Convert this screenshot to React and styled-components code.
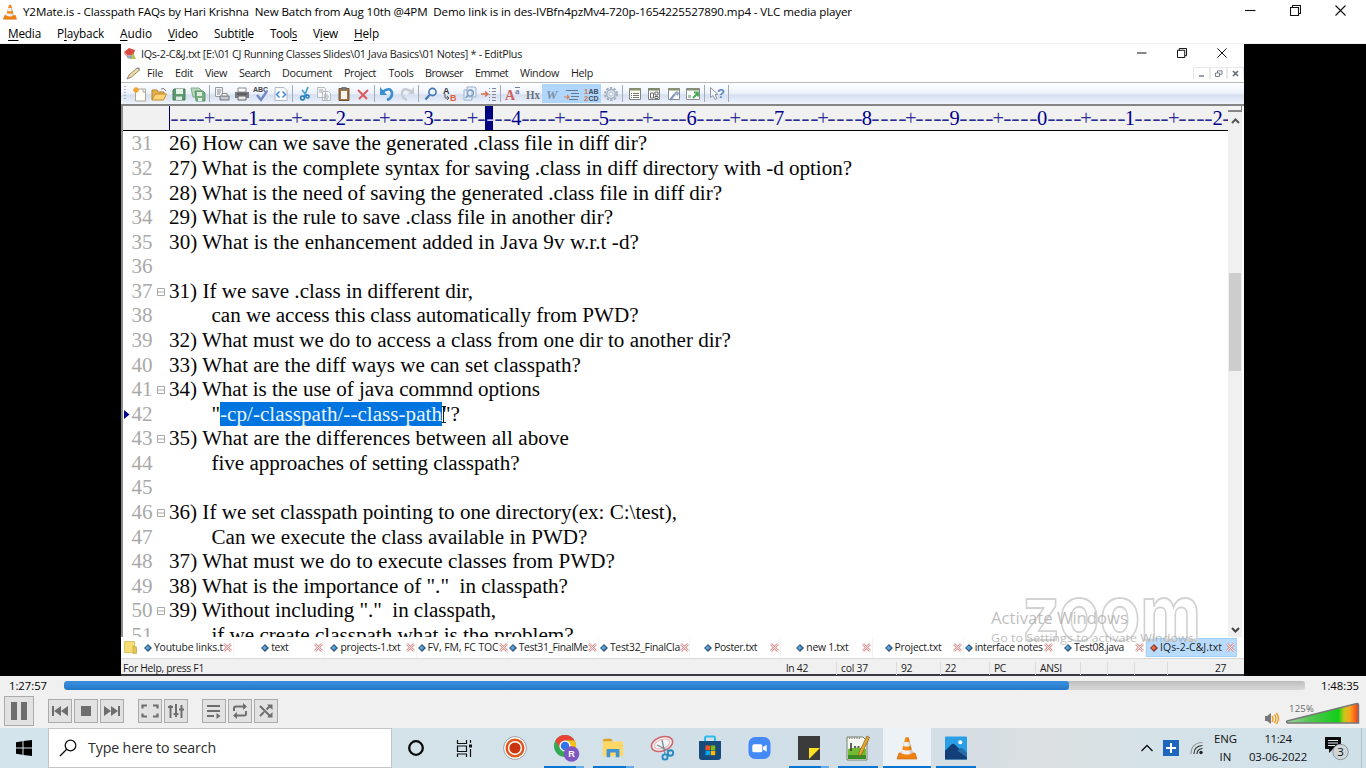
import React, { useLayoutEffect, useRef } from 'react';
import styled, { createGlobalStyle } from 'styled-components';

const Global = createGlobalStyle`
  * { box-sizing: border-box; }
  html, body { margin: 0; padding: 0; background: #000; }
  body { width: 1366px; height: 768px; overflow: hidden; font-family: "Open Sans", "Noto Sans", sans-serif; color: #000; }
  svg { display: block; flex: none; }
`;

/* ---------- text that fills a known width ---------- */
const Label = styled.span`
  display: block;
  flex: none;
  white-space: pre;
  width: ${p => p.$w}px;
  margin-left: ${p => p.$ml || 0}px;
  font-size: ${p => p.$size || 'inherit'};
  color: ${p => p.$color || 'inherit'};
  u { text-underline-offset: 2px; text-decoration-thickness: 1px; text-decoration-skip-ink: none; }
`;
function Fit({ w, ml, size, color, children }) {
  const ref = useRef(null);
  useLayoutEffect(() => {
    const el = ref.current;
    const adjust = () => {
      el.style.letterSpacing = '0px';
      const range = document.createRange();
      range.selectNodeContents(el);
      const natural = range.getBoundingClientRect().width;
      el.style.letterSpacing = `${(w - natural) / el.textContent.length}px`;
    };
    adjust();
    document.fonts.ready.then(adjust);
  }, [w]);
  return <Label ref={ref} $w={w} $ml={ml} $size={size && size + 'px'} $color={color}>{children}</Label>;
}

/* ---------- player frame ---------- */
const Player = styled.div`
  width: 1366px; height: 768px; display: flex; flex-direction: column; overflow: hidden; background: #fff;
`;
const TitleBar = styled.header`
  height: 24px; display: flex; align-items: center; font-size: 11.6px; padding-left: 2px; line-height: 16px;
`;
const WindowButtons = styled.div`
  margin-left: auto; margin-right: 20px; display: flex; gap: 34px; margin-top: -4px;
`;
const MenuBar = styled.nav`
  height: 20px; display: flex; align-items: center; gap: 16px; padding-left: 8px; font-size: 11.8px; line-height: 16px;
  border-bottom: 1px solid #f0f0f0; padding-bottom: 1px;
`;
const Video = styled.main`
  height: 632px; background: #000; padding-left: 121px; display: flex;
`;

/* ---------- editor ---------- */
const Editor = styled.section`
  width: 1123px; height: 632px; background: #fff; display: flex; flex-direction: column; color: #1c1c1c;
  border-bottom: 2px solid #3a3a40;
  > * { flex-shrink: 0; }
`;
const EditorTitle = styled.div`
  height: 19px; display: flex; align-items: center; padding-left: 2px; font-size: 10.8px; line-height: 15px; padding-bottom: 0;
`;
const EditorButtons = styled.div`
  margin-left: auto; margin-right: 17px; display: flex; gap: 30px; margin-top: -1px;
`;
const EditorMenu = styled.div`
  height: 20px; display: flex; align-items: center; padding-left: 5px; font-size: 10.8px; line-height: 15px; border-bottom: 1px solid #b9b9b9;
`;
const ChildButtons = styled.div`
  margin-left: auto; display: flex; height: 12px; margin-right: 0;
`;
const ChildButton = styled.div`
  width: 17px; height: 12px; border: 1px solid #e8e8ea; border-bottom: 0; display: flex; align-items: center; justify-content: center;
`;
const Toolbar = styled.div`
  height: 21px; display: flex; align-items: center; padding-left: 3px;
  background: linear-gradient(#fff 0, #f3f6fd 35%, #eaeffa 52%, #d5dff0 56%, #e2e9f6 80%, #f0f4fb 100%);
`;
const Grip = styled.div`
  width: 2px; height: 15px; margin-right: 4px; background: repeating-linear-gradient(#aeb5c4 0 1px, transparent 1px 3px);
`;
const Tool = styled.div`
  width: 19.5px; height: 19px; display: flex; align-items: center; justify-content: center;
  background: ${p => (p.$on ? '#b1d6fb' : 'transparent')};
`;
const ToolSeparator = styled.div`
  width: 1px; height: 17px; background: #a3a9b6; margin: 0 2.3px 0 1.2px;
`;
const EditArea = styled.div`
  height: 533px; display: flex; border-left: 2px solid #8d8d8d; border-top: 2px solid #858585;
`;
const Document = styled.div`
  width: 1105px; overflow: hidden; display: flex; flex-direction: column;
`;
const Ruler = styled.div`
  height: 25px; flex: none; display: flex; background: #f1f1f1; border-bottom: 1px solid #000; padding-left: 46px;
  font: 20.5px/25px "Liberation Serif", serif; color: #2b2b96; overflow: hidden;
`;
const RulerMark = styled.span`
  flex: none; width: 8.775px; height: 24px; display: flex; justify-content: center;
  background: ${p => (p.$here ? '#000080' : 'transparent')};
  color: ${p => (p.$here ? '#c7c7ec' : p.$digit ? '#00008b' : 'inherit')};
`;
const RulerGlyph = styled.span`
  transform: ${p => (p.$dash ? 'scaleX(1.22)' : 'none')};
  margin-left: 2px;
`;
const RulerEdge = styled.span`width: 1px; margin-right: -1px; height: 24px; flex: none; background: #000080;`;
const Lines = styled.div`
  flex: 1; overflow: hidden; padding-top: .4px;
  font: 21.1px/24.58px "Liberation Serif", serif; color: #060606;
`;
const Line = styled.div`height: 24.58px; display: flex; white-space: pre;`;
const Marker = styled.span`width: 8.5px; height: 25px; display: flex; align-items: center; padding-left: 1px;`;
const LineNumber = styled.span`width: 25px; color: #a9a9a9;`;
const Fold = styled.span`
  width: 12.5px; height: 26px; display: flex; align-items: center;
`;
const Selected = styled.span`background: #0074df; color: #e9f5ff; height: 24.58px; display: flex;`;
const Scrollbar = styled.div`
  width: 14px; background: #f0f0f0; display: flex; flex-direction: column; align-items: center;
`;
const SplitBox = styled.div`width: 14px; height: 6px; border: 1px solid #858585; border-width: 0 1px 2px 0; background: #f4f4f4;`;
const Thumb = styled.div`width: 12px; height: 98px; background: #cdcdcd; margin-top: 149px; margin-bottom: auto;`;

const Tabs = styled.div`
  height: 22px; display: flex; align-items: center; padding-left: 3px; font-size: 10.4px; line-height: 15px; border-bottom: 1px solid #d9d9d9;
`;
const Tab = styled.div`
  width: ${p => (p.$on ? 90.5 : 91.2)}px; height: 19px; flex: none; display: flex; align-items: center; padding-left: ${p => p.$pad}px; padding-right: 2px;
  background: ${p => (p.$on ? '#b9dcfc' : 'transparent')};
  box-shadow: ${p => (p.$on ? 'inset 0 0 0 1px #a3cff8' : 'inset -1px 0 0 #f2f2f2')};
`;
const TabClose = styled.span`margin-left: auto; flex: none;`;
const Status = styled.div`
  height: 15px; background: #f0f0f0; display: flex; align-items: center; padding: 3px 0 0 2px; font-size: 10.3px; line-height: 14px;
`;
const StatusCell = styled.div`
  width: ${p => p.$w}px; height: 13px; padding-left: ${p => p.$pad ?? 5}px; display: flex; align-items: center; flex: none;
  border-left: 1px solid ${p => (p.$plain ? 'transparent' : '#dcdcdc')};
`;

const Watermark = styled.div`
  position: absolute; left: 985px; top: 590px; width: 216px; height: 62px;
`;

/* ---------- player controls ---------- */
const Controls = styled.section`height: 52px; background: #f0f0f0; padding-top: 4px;`;
const SeekRow = styled.div`height: 12px; display: flex; align-items: center; font-size: 11.3px; line-height: 12px; padding-left: 9px;`;
const Seek = styled.div`
  width: 1241px; height: 9px; margin: -1px 16px 0 17px; border-radius: 3px; overflow: hidden;
  background: linear-gradient(#bcbcbc, #cfcfcf 60%, #d6d6d6);
`;
const SeekFill = styled.div`width: 1005px; height: 9px; border-radius: 3px; background: linear-gradient(#3a8fde, #2378c8);`;
const ButtonRow = styled.div`display: flex; align-items: center; height: 30px; padding-left: 4px; margin-top: 4px;`;
const Button = styled.div`
  width: ${p => (p.$big ? 30 : 24)}px; height: ${p => (p.$big ? 30 : 24)}px; margin-right: ${p => p.$gap ?? 2}px; flex: none;
  display: flex; align-items: center; justify-content: center; background: #e2e2e2; border: 1px solid #ababab;
`;
const Volume = styled.div`margin-left: auto; margin-right: 6px; display: flex; align-items: flex-end; gap: 5px; height: 30px; padding-bottom: 1px;`;
const VolumeMeter = styled.div`width: 75px; position: relative;`;
const VolumeValue = styled.div`position: absolute; left: 4px; top: 2px; line-height: 12px;`;

/* ---------- taskbar ---------- */
const Taskbar = styled.footer`
  height: 40px; display: flex; background: linear-gradient(90deg, #d3e4ec, #d4e3ea 30%, #d0dde7 65%, #dbdfe0 77%, #d5e3e8 85%, #cfe0e9);
`;
const Start = styled.div`width: 48px; display: flex; align-items: center; justify-content: center;`;
const Search = styled.div`
  width: 344px; background: #fff; border: 1px solid #c2c5c7; display: flex; align-items: center; padding-left: 10px;
  font-size: 14.2px; color: #2c2c2c; line-height: 20px;
`;
const TaskItem = styled.div`
  width: ${p => p.$w ?? 48}px; height: 40px; display: flex; align-items: center; justify-content: center; position: relative; flex: none;
  background: ${p => (p.$active ? '#edf2f6' : 'transparent')};
`;
const Running = styled.div`
  position: absolute; bottom: 0; height: 2px; left: ${p => (p.$full ? 0 : p.$left ?? 4)}px; right: ${p => (p.$full ? 0 : p.$right ?? 4)}px;
  background: ${p => (p.$many ? 'linear-gradient(90deg,#0a76d2 0 80%,#63aae6 80%)' : '#0a76d2')};
`;
const Tray = styled.div`margin-left: auto; display: flex; align-items: center; padding-right: 4px;`;
const TrayIcon = styled.div`margin-right: ${p => p.$gap}px;`;
const Stack = styled.div`
  display: flex; flex-direction: column; align-items: center; font-size: 11.4px; line-height: 17.5px; margin-right: ${p => p.$gap}px; color: #111;
  padding-bottom: 1px;
`;
const Edge = styled.div`width: 1px; height: 40px; background: #b3c2ca;`;

/* ---------- icons ---------- */
const Cone = ({ s }) => (
  <svg width={s} height={s} viewBox="0 0 24 24">
    <path d="M4 17h16l2 6H2z" fill="#f08010" stroke="#c9620a" strokeWidth=".6" />
    <path d="M10.400 1.500q1.600-1 3.200 0L18 18q-6 3.400-12 0z" fill="#f58a16" />
    <path d="M9.300 6h5.400l1.100 4q-3.800 1.600-7.600 0zM7.100 13.500q4.900 2 9.800 0l.9 3.800q-5.800 2.600-11.600 0z" fill="#eef0f2" />
    <path d="M12.500 1h1.100L18 18l-3 1z" fill="#8a4a10" opacity=".22" />
  </svg>
);
const WinButton = ({ kind, s = 11, c = '#111' }) => (
  <svg width={s} height={s} viewBox="0 0 11 11" fill="none" stroke={c} strokeWidth="1.1">
    {kind === 'min' && <path d="M0 5.500h10.500" />}
    {kind === 'max' && <path d="M.5 2.500h8v8h-8zM2.500 2.500v-2h8v8h-2" />}
    {kind === 'close' && <path d="M.5.500l10 10M10.500.500l-10 10" />}
  </svg>
);
const Ico = ({ children, s = 16 }) => <svg width={s} height={s} viewBox="0 0 16 16" fill="none">{children}</svg>;
const serif = { fontFamily: 'Liberation Serif, serif', fontWeight: 700 };
const sans = { fontFamily: 'Liberation Sans, sans-serif', fontWeight: 700 };

const toolIcons = {
  new: <Ico><path d="M4.500 3h9v12h-10v-8z" fill="#fffdf5" stroke="#a9a9a2" /><path d="M11 3v3h2.500" stroke="#aaa" /><path d="M4 1v6M1 4h6M2 2l4 4M6 2l-4 4" stroke="#f0a530" strokeWidth="1.300" /></Ico>,
  open: <Ico><path d="M1 14V4h5l1 2h6v3" fill="#e8b34e" stroke="#b98528" /><path d="M1 14l3-6h11.500l-3 6z" fill="#ffd37a" stroke="#c18d2c" /><path d="M10 3q3-2 5 2" stroke="#777" /></Ico>,
  save: <Ico><path d="M3 3h11v11H2V4z" fill="#5b9a6d" stroke="#4e7d5c" /><path d="M5 3h7v5H5z" fill="#e8f2e9" /><path d="M5 10.500h6V14H5z" fill="#e0e8e2" /></Ico>,
  saveAll: <Ico><path d="M1 2h8l2 2v7H3z" fill="#bcd8c0" stroke="#7fae89" /><path d="M5 5h8l2 2v8H6z" fill="#76ad81" stroke="#5c946d" /><path d="M7 6h5v4H7zM8 12h4v3H8z" fill="#dcefdc" /></Ico>,
  preview: <Ico><path d="M1.500 1.500h7v9h-7z" fill="#f2f4f7" stroke="#999" /><path d="M3 4h4M3 6h4M3 8h3" stroke="#889" /><path d="M6 10h9v4H6z" fill="#c6cad0" stroke="#707681" /><path d="M8 7.500h5V10H8z" fill="#fff" stroke="#888" /></Ico>,
  print: <Ico><path d="M4 2h8v4H4z" fill="#fff" stroke="#888" /><path d="M1 6h14v6H1z" fill="#777c82" /><path d="M3 8h10" stroke="#444" /><path d="M4 10h8v4H4z" fill="#e8e8e8" stroke="#666" /></Ico>,
  spell: <Ico><text x="0" y="6" fontSize="7" fill="#444" {...sans}>ABC</text><path d="M4 9l4 5 6-9" stroke="#7088c8" strokeWidth="2.300" /></Ico>,
  code: <Ico><path d="M2 1.500h9l3 3v10H2z" fill="#fafcff" stroke="#b2bac6" /><path d="M6.500 5.500l-3 3 3 3M9.500 5.500l3 3-3 3" stroke="#4b8acb" strokeWidth="1.500" /></Ico>,
  cut: <Ico><path d="M11 1L7 11M5 4l5 6" stroke="#4ba1d5" strokeWidth="1.800" /><circle cx="5.500" cy="12" r="1.900" stroke="#217bbd" strokeWidth="1.500" /><circle cx="10.500" cy="10.500" r="1.600" stroke="#217bbd" strokeWidth="1.500" /></Ico>,
  copy: <Ico><path d="M1.500 1.500h7l1 1v9h-8zM6.500 5.500h6l2 2v7h-8z" fill="#f4f6f8" stroke="#b4bac1" /><path d="M3 4h4M3 6h3M8 9h4M8 11h5M8 13h4" stroke="#a3aab4" /></Ico>,
  paste: <Ico><path d="M3 2.500h10v12H3z" fill="#a57443" stroke="#6b5238" /><path d="M5 5h6v8H5z" fill="#f7f4ed" /><path d="M5.500 1h5v3h-5z" fill="#777" /></Ico>,
  remove: <Ico><path d="M3 4l9 9M13 4l-9 9" stroke="#dc5a5e" strokeWidth="2" /></Ico>,
  undo: <Ico><path d="M3 6q9-6 10 1 .3 5-5 7" stroke="#3d90cf" strokeWidth="2.700" /><path d="M1 1v8h7z" fill="#3d90cf" /></Ico>,
  redo: <Ico><path d="M13 6Q4 0 3 7q-.3 5 5 7" stroke="#c6cbd3" strokeWidth="2.300" /><path d="M15 1v7H9z" fill="#c6cbd3" /></Ico>,
  find: <Ico><circle cx="9.500" cy="6" r="3.600" stroke="#4276b5" strokeWidth="1.600" /><path d="M6.500 9L2.500 13.500" stroke="#4276b5" strokeWidth="2.200" /></Ico>,
  replace: <Ico><text x="1" y="7.500" fontSize="9" fill="#333" {...sans}>A</text><text x="8" y="15" fontSize="9" fill="#e2613b" {...sans}>B</text><path d="M3 8v4h4M5 10l2 2-2 2" stroke="#555" /></Ico>,
  files: <Ico><path d="M2 4h8v10H2zM5 1h8l1 1v9H5z" fill="#e8eff8" stroke="#9ab1cc" /><circle cx="8.500" cy="7" r="3" stroke="#7c9fc6" strokeWidth="1.300" /><path d="M6 9.500L3.500 12" stroke="#7c9fc6" strokeWidth="1.500" /></Ico>,
  goto: <Ico><path d="M0 8h6M4 5.500L7 8l-3 2.500" stroke="#dd6a48" strokeWidth="1.400" /><path d="M8 2.500h1M11 2.500h4M8 5.500h1M11 5.500h4M8 8.500h1M11 8.500h4M8 11.500h1M11 11.500h4M8 14.500h1M11 14.500h4" stroke="#858b95" /></Ico>,
  font: <Ico><text x="0" y="14" fontSize="14" fill="#d1605c" {...serif}>A</text><text x="10" y="8" fontSize="9" fill="#6a80a5" {...serif}>a</text><path d="M10 1.500h5" stroke="#6a80a5" /></Ico>,
  hex: <Ico><text x="1" y="12.500" fontSize="12" textLength="14" lengthAdjust="spacingAndGlyphs" fill="#6b737e" {...serif}>Hx</text></Ico>,
  wrap: <Ico><text x="2" y="13" fontSize="13" fill="#7d90a8" fontStyle="italic" {...serif}>W</text></Ico>,
  indent: <Ico><path d="M2 4.500h12M7 7.500h8M7 10.500h8M5 13.500h9" stroke="#64778f" strokeWidth="1.200" /><path d="M0 11h5M3 9l2 2-2 2" stroke="#dc7b4f" strokeWidth="1.200" /></Ico>,
  numbers: <Ico><text x="1" y="7.500" fontSize="7.500" fill="#d4764f" {...sans}>1</text><text x="1" y="15" fontSize="7.500" fill="#d4764f" {...sans}>2</text><text x="5.500" y="7.500" fontSize="7" fill="#3f4d60" {...sans}>AB</text><text x="5.500" y="15" fontSize="7" fill="#3f4d60" {...sans}>CD</text></Ico>,
  gear: <Ico><circle cx="8" cy="8" r="6" stroke="#a0aebf" strokeWidth="2" strokeDasharray="2.400 1.370" /><circle cx="8" cy="8" r="4.300" fill="#dbe5ef" stroke="#a0aebf" strokeWidth="1.300" /><circle cx="8" cy="8" r="2" fill="#fff" stroke="#b0bdcb" /></Ico>,
  list: <Ico><path d="M2.500 2.500h11v11h-11z" fill="#fffff4" stroke="#7d8288" /><path d="M2 3.500h12" stroke="#8a9466" strokeWidth="2" /><path d="M4 7.500h1M6 7.500h6M4 9.500h1M6 9.500h6M4 11.500h1M6 11.500h6" stroke="#777" /></Ico>,
  panes: <Ico><path d="M2.500 2.500h11v11h-11z" fill="#fff" stroke="#7d8288" /><path d="M2 3.500h12" stroke="#7f8962" strokeWidth="2" /><path d="M4.500 7h3v5h-3zM9 6h3v3H9zM9 10.500h3v2H9z" stroke="#666" /></Ico>,
  tools: <Ico><path d="M2.500 2.500h11v11h-11z" fill="#fff" stroke="#878c92" /><path d="M2 3.500h12" stroke="#8a9368" strokeWidth="2" /><path d="M4 14l5-6" stroke="#7c96bb" strokeWidth="2" /><path d="M8 7l3-2 2 2-1 3z" fill="#91a9c9" /></Ico>,
  browser: <Ico><path d="M1.500 2.500h13v11h-13z" fill="#fff" stroke="#878c92" /><path d="M2 3.500h12" stroke="#84916c" strokeWidth="2" /><path d="M8 12l5-5M9 6.500h4v4" stroke="#45aa52" strokeWidth="1.800" /><path d="M3 9h3v3H3z" fill="#a9c6ad" /></Ico>,
  help: <Ico><path d="M1.500 1.500v10l2.500-2 2 4 2-1-2-4h3z" fill="#f4f5f7" stroke="#9299a4" /><text x="8" y="12" fontSize="13" fill="#5a88c3" {...sans}>?</text></Ico>,
};
const toolGroups = [
  ['new', 'open', 'save', 'saveAll'],
  ['preview', 'print', 'spell', 'code'],
  ['cut', 'copy', 'paste', 'remove'],
  ['undo', 'redo'],
  ['find', 'replace', 'files', 'goto'],
  ['font', 'hex', 'wrap', 'indent', 'numbers', 'gear'],
  ['list', 'panes', 'tools', 'browser'],
  ['help'],
];
const pressed = ['wrap', 'indent', 'numbers'];

const Diamond = ({ hot }) => (
  <svg width="8" height="8" viewBox="0 0 8 8"><path d="M4 0l4 4-4 4-4-4z" fill={hot ? '#8c3b2c' : '#35597f'} /><path d="M3.600 1.500L6 4 3.600 6 1.500 4z" fill={hot ? '#ee6a45' : '#58a8e0'} /></svg>
);
const CloseMark = () => (
  <svg width="9" height="9" viewBox="0 0 9 9"><path d="M1 1l7 7M8 1L1 8" stroke="#dc9c9c" strokeWidth="2.600" /><path d="M1 1l7 7M8 1L1 8" stroke="#fbeaea" strokeWidth=".9" /></svg>
);
const FoldBox = () => (
  <svg width="8" height="8" viewBox="0 0 8 8" fill="none" stroke="#a8a8a8"><path d="M.5.500h7v7h-7zM1 4h6" /></svg>
);

/* ---------- data ---------- */
const menus = [['', 'M', 'edia', 33], ['P', 'l', 'ayback', 47], ['', 'A', 'udio', 32], ['', 'V', 'ideo', 30], ['Subti', 't', 'le', 40], ['Tool', 's', '', 27], ['V', 'i', 'ew', 25], ['', 'H', 'elp', 25]];
const editorMenus = [['File', 16, 6], ['Edit', 18, 12], ['View', 22, 12], ['Search', 31, 12], ['Document', 50, 12], ['Project', 32, 12], ['Tools', 25, 12.500], ['Browser', 38, 11.500], ['Emmet', 33, 12], ['Window', 39, 12], ['Help', 22, 12]];
const lines = [
  [31, '26) How can we save the generated .class file in diff dir?', 478],
  [32, '27) What is the complete syntax for saving .class in diff directory with -d option?', 683],
  [33, '28) What is the need of saving the generated .class file in diff dir?', 553],
  [34, '29) What is the rule to save .class file in another dir?', 444],
  [35, '30) What is the enhancement added in Java 9v w.r.t -d?', 470],
  [36],
  [37, '31) If we save .class in different dir,', 304, 'fold'],
  [38, 'can we access this class automatically from PWD?', 427, 'indent'],
  [39, '32) What must we do to access a class from one dir to another dir?', 562],
  [40, '33) What are the diff ways we can set classpath?', 412],
  [41, '34) What is the use of java commnd options', 371, 'fold'],
  [42, null, 0, 'indent'],
  [43, '35) What are the differences between all above', 400, 'fold'],
  [44, 'five approaches of setting classpath?', 308, 'indent'],
  [45],
  [46, '36) If we set classpath pointing to one directory(ex: C:\\test),', 508, 'fold'],
  [47, 'Can we execute the class available in PWD?', 376, 'indent'],
  [48, '37) What must we do to execute classes from PWD?', 446],
  [49, '38) What is the importance of "."  in classpath?', 399],
  [50, '39) Without including "."  in classpath,', 327, 'fold'],
  [51, 'if we create classpath what is the problem?', 362, 'indent'],
];
const tabs = [['Youtube links.t', 69, 1], ['text', 17, 27], ['projects-1.txt', 60, 5], ['FV, FM, FC TOC', 71, 1], ['Test31_FinalMe', 69, 1], ['Test32_FinalCla', 70, 1], ['Poster.txt', 43, 14], ['new 1.txt', 42, 15], ['Project.txt', 47, 12], ['interface notes', 68, 1], ['Test08.java', 50, 9], ['IQs-2-C&J.txt', 62, 4]];
const marks = Array.from({ length: 121 }, (_, i) => (i % 10 === 9 ? String(((i + 1) / 10) % 10) : i % 10 === 4 ? '+' : '-'));

export default function App() {
  return (
    <>
      <Global />
      <Player>
        <TitleBar>
          <Cone s={16} />
          <Fit w={829} ml={5}>Y2Mate.is - Classpath FAQs by Hari Krishna  New Batch from Aug 10th @4PM  Demo link is in des-IVBfn4pzMv4-720p-1654225527890.mp4 - VLC media player</Fit>
          <WindowButtons><WinButton kind="min" /><WinButton kind="max" /><WinButton kind="close" /></WindowButtons>
        </TitleBar>
        <MenuBar>
          {menus.map(([a, k, b, w]) => <Fit key={a + k + b} w={w}>{a}<u>{k}</u>{b}</Fit>)}
        </MenuBar>
        <Video>
          <Editor>
            <EditorTitle>
              <svg width="13" height="13" viewBox="0 0 13 13"><path d="M1 5l5-4 6 2-2 6-6-1z" fill="#d94c3f" /><path d="M1 5l3 3 1 3-4-4z" fill="#e8a49a" /><path d="M10 6l3 6H6z" fill="#b8c050" /><path d="M4 8l5 1-1 3-4-1z" fill="#8fa9c4" /></svg>
              <Fit w={381} ml={5}>IQs-2-C&J.txt [E:\01 CJ Running Classes Slides\01 Java Basics\01 Notes] * - EditPlus</Fit>
              <EditorButtons><WinButton kind="min" s={10} /><WinButton kind="max" s={10} /><WinButton kind="close" s={10} /></EditorButtons>
            </EditorTitle>
            <EditorMenu>
              <svg width="15" height="14" viewBox="0 0 15 14"><path d="M1 13l2-4 8-7 2.500 2L5.500 11z" fill="#f0dca0" stroke="#7a705a" strokeWidth=".8" /><path d="M11 2l1-1 2.500 2-1 1z" fill="#999" /></svg>
              {editorMenus.map(([t, w, ml]) => <Fit key={t} w={w} ml={ml}>{t}</Fit>)}
              <ChildButtons>
                <ChildButton><svg width="7" height="7"><path d="M1 6h5" stroke="#777f8c" strokeWidth="1.500" /></svg></ChildButton>
                <ChildButton><svg width="8" height="7" fill="none" stroke="#777f8c"><path d="M.5 3h4v3.500h-4zM2.500 3V.800h4.500v3.500H5" /></svg></ChildButton>
                <ChildButton><svg width="7" height="7"><path d="M1 1l5 5M6 1L1 6" stroke="#666d78" strokeWidth="1.700" /></svg></ChildButton>
              </ChildButtons>
            </EditorMenu>
            <Toolbar>
              <Grip />
              {toolGroups.map((group, i) => (
                <React.Fragment key={i}>
                  {group.map(name => <Tool key={name} $on={pressed.includes(name)}>{toolIcons[name]}</Tool>)}
                  <ToolSeparator />
                </React.Fragment>
              ))}
            </Toolbar>
            <EditArea>
              <Document>
                <Ruler>
                  <RulerEdge />
                  {marks.map((m, i) => <RulerMark key={i} $here={i === 36} $digit={i % 10 === 9}><RulerGlyph $dash={m === '-'}>{m}</RulerGlyph></RulerMark>)}
                </Ruler>
                <Lines>
                  {lines.map(([n, text, w, kind]) => (
                    <Line key={n}>
                      <Marker>{n === 42 && <svg width="6" height="9"><path d="M0 0l5.500 4.500L0 9z" fill="#000090" /></svg>}</Marker>
                      <LineNumber>{n}</LineNumber>
                      <Fold>{kind === 'fold' && <FoldBox />}</Fold>
                      {text && <Fit w={w} ml={kind === 'indent' ? 42.500 : 0}>{text}</Fit>}
                      {n === 42 && (
                        <>
                          <Fit w={8.500} ml={42.500}>"</Fit>
                          <Selected><Fit w={222}>-cp/-classpath/--class-path</Fit></Selected>
                          <svg width="5" height="20" style={{ marginRight: -5, marginTop: 3 }} fill="none" stroke="#222"><path d="M0 1.500h4M1.500 1.500v16M0 17.500h4" /></svg>
                          <Fit w={18}>"?</Fit>
                        </>
                      )}
                    </Line>
                  ))}
                </Lines>
              </Document>
              <Scrollbar>
                <SplitBox />
                <svg width="9" height="6" style={{ marginTop: 6 }} fill="none" stroke="#555" strokeWidth="2"><path d="M1 5l3.500-3.500L8 5" /></svg>
                <Thumb />
                <svg width="9" height="6" style={{ marginBottom: 4 }} fill="none" stroke="#444" strokeWidth="2"><path d="M1 1l3.500 3.500L8 1" /></svg>
              </Scrollbar>
            </EditArea>
            <Tabs>
              <svg width="13" height="13" viewBox="0 0 13 13" style={{ marginRight: 6 }}><path d="M.5.500h10v11H.5z" fill="#f5dc73" stroke="#e0c363" /><path d="M9 5l3.500 1v6.500H9z" fill="#e6c455" stroke="#c7a43d" strokeWidth=".7" /></svg>
              {tabs.map(([t, w, pad], i) => (
                <Tab key={t} $pad={pad} $on={i === 11}>
                  <Diamond hot={i === 11} /><Fit w={w} ml={2}>{t}</Fit><TabClose><CloseMark /></TabClose>
                </Tab>
              ))}
            </Tabs>
            <Status>
              <Fit w={81}>For Help, press F1</Fit>
              <StatusCell $w={56} $plain style={{ marginLeft: 576 }}><Fit w={22}>ln 42</Fit></StatusCell>
              <StatusCell $w={60} $pad={4}><Fit w={27}>col 37</Fit></StatusCell>
              <StatusCell $w={44} $pad={4}><Fit w={11}>92</Fit></StatusCell>
              <StatusCell $w={49} $pad={4}><Fit w={11}>22</Fit></StatusCell>
              <StatusCell $w={46} $pad={4}><Fit w={12}>PC</Fit></StatusCell>
              <StatusCell $w={45} $pad={4}><Fit w={22}>ANSI</Fit></StatusCell>
              <StatusCell $w={27} /><StatusCell $w={27} /><StatusCell $w={33} />
              <StatusCell $w={70} $pad={47}><Fit w={11}>27</Fit></StatusCell>
            </Status>
          </Editor>
        </Video>
        <Watermark>
          <svg width="216" height="62">
            <text x="37" y="50" fontSize="76" fontFamily="Inter, sans-serif" fontWeight="700" textLength="179" lengthAdjust="spacingAndGlyphs" fill="#ffffff" fillOpacity=".6" stroke="#d2d2d2" strokeWidth="1.800">zoom</text>
            <text x="6" y="34" fontSize="15.800" fontFamily="Open Sans, sans-serif" textLength="137" lengthAdjust="spacingAndGlyphs" fill="#a8a8a8" fillOpacity=".75">Activate Windows</text>
            <text x="6" y="52" fontSize="11.500" fontFamily="Open Sans, sans-serif" textLength="206" lengthAdjust="spacingAndGlyphs" fill="#a8a8a8" fillOpacity=".75">Go to Settings to activate Windows.</text>
          </svg>
        </Watermark>
        <Controls>
          <SeekRow>
            <Fit w={38}>1:27:57</Fit>
            <Seek><SeekFill /></Seek>
            <Fit w={38}>1:48:35</Fit>
          </SeekRow>
          <ButtonRow>
            <Button $big $gap={14}><svg width="16" height="18" fill="#6e6e6e"><path d="M0 0h6v18H0zM10 0h6v18h-6z" /></svg></Button>
            <Button><svg width="16" height="12" fill="#6e6e6e"><path d="M0 1h2v10H0zM9 1v10L2 6zM16 1v10L9 6z" /></svg></Button>
            <Button><svg width="10" height="10" fill="#6e6e6e"><path d="M0 0h10v10H0z" /></svg></Button>
            <Button $gap={14}><svg width="16" height="12" fill="#6e6e6e"><path d="M14 1h2v10h-2zM7 1v10l7-5zM0 1v10l7-5z" /></svg></Button>
            <Button><svg width="18" height="16" fill="none" stroke="#6e6e6e" strokeWidth="2.200"><path d="M1.500 5.500V2.500H6M12 2.500h4.500v3M16.500 10.500v3H12M6 13.500H1.500v-3" /></svg></Button>
            <Button $gap={14}><svg width="18" height="16" fill="none" stroke="#6e6e6e" strokeWidth="2"><path d="M3.500 2v13M9 1v13M14.500 2v13M1 4h5M6.500 11h5M12 6.500h5" /></svg></Button>
            <Button><svg width="16" height="16" fill="none" stroke="#6e6e6e" strokeWidth="2"><path d="M1 3h13M1 8h13M1 13h7" /><path d="M10.500 10l4 3-4 3z" fill="#6e6e6e" stroke="none" /></svg></Button>
            <Button><svg width="16" height="16" fill="none" stroke="#6e6e6e" strokeWidth="2"><path d="M2 8V5q0-1.500 2-1.500h8M14 8v3q0 1.500-2 1.500H4" /><path d="M11 0l4 3.500L11 7zM5 9l-4 3.500L5 16z" fill="#6e6e6e" stroke="none" /></svg></Button>
            <Button><svg width="16" height="16" fill="none" stroke="#6e6e6e" strokeWidth="2"><path d="M2 3l10 10M2 13l4-4M8.500 6.500L12 3" /><path d="M9 1.500h5.500V7zM9 14.500h5.500V9z" fill="#6e6e6e" stroke="none" /></svg></Button>
            <Volume>
              <svg width="16" height="14" viewBox="0 0 16 14" fill="none" style={{ marginBottom: -1 }}><path d="M1 4h2l4-3v11l-4-3H1z" fill="#777" /><path d="M8 4q2 3 0 6M10.500 2.500q3 4 0 8.500M12.500 1q4 5.500 0 11" stroke="#f39a1d" strokeWidth="1.400" /></svg>
              <VolumeMeter>
                <svg width="75" height="24" viewBox="0 0 75 24">
                  <defs><linearGradient id="vol"><stop offset="0" stopColor="#a3d6a3" /><stop offset=".3" stopColor="#58c458" /><stop offset=".72" stopColor="#12cf18" /><stop offset=".8" stopColor="#c4c818" /><stop offset=".88" stopColor="#fba61c" /><stop offset="1" stopColor="#f03a1c" /></linearGradient></defs>
                  <path d="M2 20L72 2.500Q73.500 2.500 73.500 4v18H2.500Q1 21 2 20z" fill="url(#vol)" stroke="#777" strokeWidth="1.500" />
                </svg>
                <VolumeValue><Fit w={25} size={9.500} color="#6a6a6a">125%</Fit></VolumeValue>
              </VolumeMeter>
            </Volume>
          </ButtonRow>
        </Controls>
        <Taskbar>
          <Start><svg width="16" height="16"><path d="M0 2.200l6.500-.9v6.200H0zM7.500 1.100L16 0v7.500H7.500zM0 8.500h6.500v6.200L0 13.800zM7.500 8.500H16V16l-8.500-1.100z" /></svg></Start>
          <Search>
            <svg width="18" height="18" fill="none" stroke="#111" strokeWidth="1.300"><circle cx="11.500" cy="6.500" r="5.300" /><path d="M7.700 10.300L1 17" /></svg>
            <Fit w={128} ml={11}>Type here to search</Fit>
          </Search>
          <TaskItem><svg width="18" height="18" fill="none" stroke="#0a0a0a" strokeWidth="2.300"><circle cx="9" cy="9" r="6.800" /></svg></TaskItem>
          <TaskItem><svg width="17" height="17" fill="none" stroke="#111" strokeWidth="1.200"><path d="M1.500 0v3.500h9V0M1.500 6h9v5.500h-9zM1.500 17v-3h9v3M14.500 0v3M14.500 9v8" /><path d="M13 4.500h3v3h-3z" fill="#111" stroke="none" /></svg></TaskItem>
          <TaskItem $w={54}><svg width="24" height="26" viewBox="0 0 24 26"><circle cx="12" cy="13" r="11.400" fill="#fff" stroke="#8b8b8b" strokeWidth=".8" /><circle cx="12" cy="13" r="8.300" fill="#fff" stroke="#e25619" strokeWidth="2.400" /><circle cx="12" cy="13" r="5.600" fill="#ca3511" /></svg></TaskItem>
          <TaskItem $w={46}><svg width="28" height="28" viewBox="0 0 28 28" style={{ marginLeft: 3 }}>
            <circle cx="12" cy="12" r="11" fill="#34a853" /><path d="M2.400 6.600A11 11 0 0 1 12 1a11 11 0 0 1 9.600 5.500H12L7 14z" fill="#ea4335" /><path d="M12 6.500h9.600A11 11 0 0 1 11.500 23l5-8z" fill="#fbc116" />
            <circle cx="12" cy="12" r="5.600" fill="#fff" /><circle cx="12" cy="12" r="4.300" fill="#2f75e8" /><circle cx="18.500" cy="20" r="7.800" fill="#7e57c2" /><text x="18.500" y="23.200" fontSize="9" textAnchor="middle" fill="#fff" {...sans}>R</text></svg><Running $left={2} $many /></TaskItem>
          <TaskItem $w={50}><svg width="22" height="22" viewBox="0 0 24 22"><path d="M1 3q0-2 2-2h7l2 3H1z" fill="#dca11f" /><path d="M1 4h21q1 0 1 1v15H1z" fill="#ffd766" /><path d="M5 21v-8q0-1 1-1h12q1 0 1 1v8h-4v-5H9v5z" fill="#3c94d4" /></svg><Running $left={5} $many /></TaskItem>
          <TaskItem><svg width="26" height="26" viewBox="0 0 26 26" fill="none"><ellipse cx="13" cy="9" rx="11" ry="7" transform="rotate(-20 13 9)" fill="#f2f4f5" stroke="#d0666b" strokeWidth="1.500" /><ellipse cx="13" cy="9" rx="8" ry="4.500" transform="rotate(-20 13 9)" stroke="#e6b5b7" /><path d="M13 5l3 14M8 10l12 6" stroke="#7d888f" strokeWidth="1.300" /><circle cx="21.500" cy="18" r="2.700" stroke="#278ac2" strokeWidth="1.900" /><circle cx="16" cy="22" r="2.600" stroke="#278ac2" strokeWidth="1.900" /></svg></TaskItem>
          <TaskItem><svg width="24" height="26" viewBox="0 0 24 26"><path d="M7 7V3q0-1.500 1.500-1.500h7Q17 1.500 17 3v4" fill="none" stroke="#2dbbe9" strokeWidth="2" /><path d="M1 6h22v16q0 3-3 3H4q-3 0-3-3z" fill="#174b7c" /><path d="M7.500 10.500H12V15H7.500z" fill="#f35325" /><path d="M12.700 10.500h4.500V15h-4.500z" fill="#81bc06" /><path d="M7.500 15.700H12v4.500H7.500z" fill="#05a6f0" /><path d="M12.700 15.700h4.500v4.500h-4.500z" fill="#ffba08" /></svg></TaskItem>
          <TaskItem $w={51}><svg width="23" height="24" viewBox="0 0 24 24"><rect x=".5" y=".5" width="23" height="23" rx="7" fill="#4389f8" /><rect x="4.500" y="8" width="10.500" height="8.500" rx="2" fill="#fff" /><path d="M15.700 11l3.800-2.500v7.500l-3.800-2.500z" fill="#fff" /></svg></TaskItem>
          <TaskItem><svg width="22" height="24" viewBox="0 0 22 24"><path d="M0 0h22v24H0z" fill="#3b3b3b" /><path d="M11 12h11L11 23z" fill="#ffdf1f" /></svg><Running $many /></TaskItem>
          <TaskItem $w={50}><svg width="24" height="26" viewBox="0 0 24 26"><path d="M1 2h16l4 4v19H1z" fill="#f4f6ef" stroke="#77806c" /><path d="M2 14q9-3 18 0v10H2z" fill="#71ba31" /><path d="M2 20h18v4H2z" fill="#378d24" /><path d="M5 8v8M8 12h2M11.500 12h2" stroke="#333" strokeWidth="1.500" /><path d="M3 3h12" stroke="#888" strokeDasharray="1 1.500" strokeWidth="2" /><path d="M21 1l2.500 1.500-8 17-3 2 .5-4z" fill="#e9a72c" stroke="#7c5b20" strokeWidth=".7" /></svg><Running $left={5} $right={5} /></TaskItem>
          <TaskItem $active><Cone s={24} /><Running $full /></TaskItem>
          <TaskItem $w={50}><svg width="22" height="24" viewBox="0 0 23 24"><rect width="23" height="24" rx="1" fill="#2a9fe5" /><path d="M0 15l7-7q1.500-1 3 0l13 13v3H0z" fill="#123f78" /><path d="M13 15l3-2.500q1.200-1 2.500 0L23 17v5z" fill="#276ca9" /><circle cx="16" cy="6" r="2.200" fill="#fff" /></svg><Running $left={5} $right={5} /></TaskItem>
          <Tray>
            <TrayIcon $gap={10}><svg width="12" height="8" fill="none" stroke="#111" strokeWidth="1.300"><path d="M.5 7L6 1.500 11.500 7" /></svg></TrayIcon>
            <TrayIcon $gap={11}><svg width="16" height="16"><path d="M0 0h16v16H0z" fill="#1d65bd" /><path d="M8 3v10M3 8h10" stroke="#fff" strokeWidth="2" /></svg></TrayIcon>
            <TrayIcon $gap={11}><svg width="13" height="14" fill="none" stroke="#333" strokeWidth="1.200"><path d="M1 13Q1 2 12.500 1.500" stroke="#999" /><path d="M4 13q0-8 8.500-8.500M7 13q0-5 5.500-5.500" /><circle cx="11" cy="11.500" r="1.700" fill="#222" stroke="none" /></svg></TrayIcon>
            <Stack $gap={12}><Fit w={23}>ENG</Fit><Fit w={12}>IN</Fit></Stack>
            <Stack $gap={18}><Fit w={27}>11:24</Fit><Fit w={58}>03-06-2022</Fit></Stack>
            <TrayIcon $gap={12}><svg width="24" height="25" viewBox="0 0 24 25"><path d="M0 1h16v12H8l-4 4v-4H0z" fill="#0a0a0a" /><path d="M3 4.500h10M3 7h10M3 9.500h7" stroke="#dce8ee" strokeWidth="1" /><circle cx="15.500" cy="16" r="7.700" fill="#cfd6da" stroke="#8e979c" /><text x="15.500" y="20" fontSize="11.500" textAnchor="middle" fill="#111" fontFamily="Open Sans, sans-serif">3</text></svg></TrayIcon>
            <Edge />
          </Tray>
        </Taskbar>
      </Player>
    </>
  );
}
